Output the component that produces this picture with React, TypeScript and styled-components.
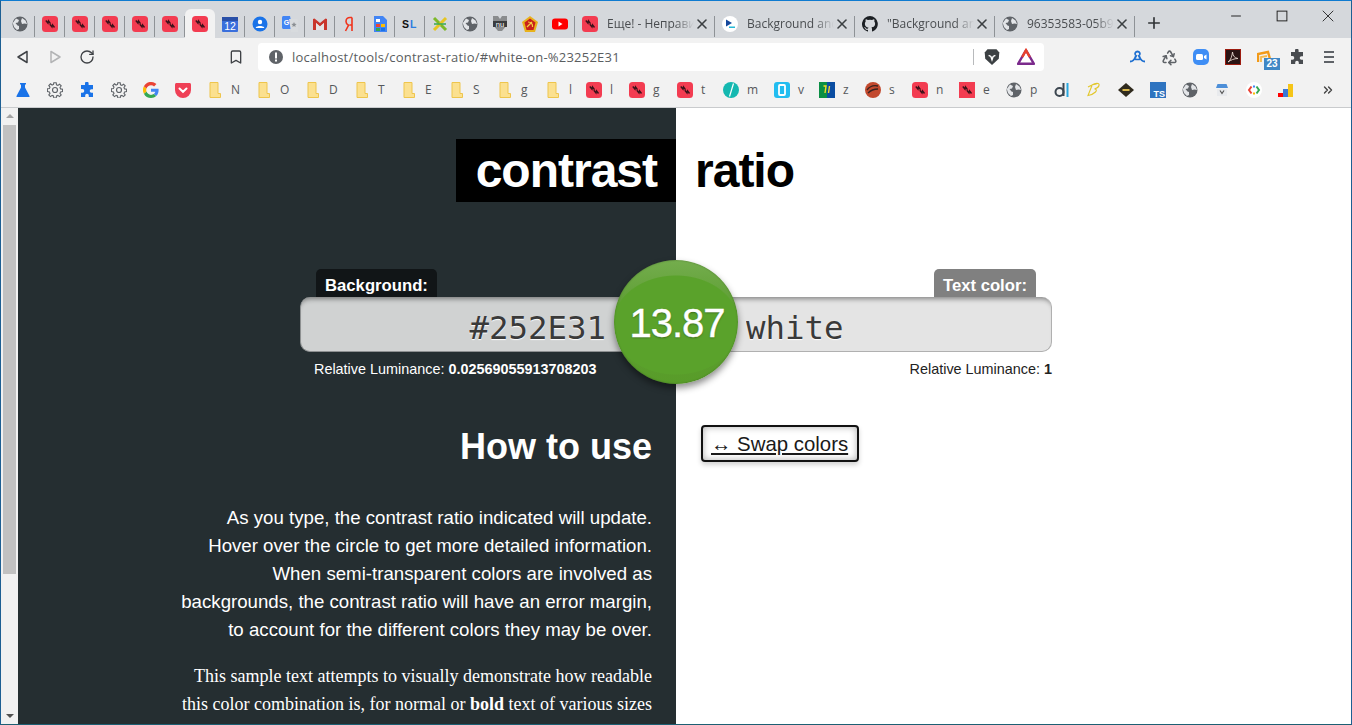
import * as React from 'react';
import styled, { createGlobalStyle } from 'styled-components';
import { Bookmark as BookmarkIcon, ChevronsRight, Plus, Recycle, RotateCw, X } from 'lucide-react';

const GlobalStyle = createGlobalStyle`
  html, body { margin: 0; padding: 0; height: 100%; overflow: hidden; background: #fff; }
  * { box-sizing: border-box; }
`;

const uiFont = '"Open Sans", "Noto Sans", sans-serif';
const pageFont = '"Liberation Sans", Arial, sans-serif';

const Frame = styled.div`
  width: 1352px;
  height: 725px;
  display: flex;
  flex-direction: column;
  overflow: hidden;
  border-top: 1px solid #0f7bd0;
  border-left: 1px solid #1d5f93;
  border-right: 1px solid #1d5f93;
  border-bottom: 1px solid #1d5f73;
  font-family: ${uiFont};
`;

const TabStrip = styled.div`
  height: 37px;
  flex: none;
  display: flex;
  align-items: flex-end;
  padding-left: 4px;
  background: #d5d8dc;
`;

const Tab = styled.div<{ $active?: boolean; $wide?: boolean }>`
  position: relative;
  width: ${p => (p.$wide ? '140px' : '30px')};
  height: 29px;
  flex: none;
  display: flex;
  align-items: center;
  justify-content: ${p => (p.$wide ? 'flex-start' : 'center')};
  padding: ${p => (p.$wide ? '0 5px 0 7px' : '0')};
  border-radius: 6px 6px 0 0;
  background: ${p => (p.$active ? '#f2f2f2' : 'transparent')};
  &::after {
    content: '';
    position: absolute;
    right: 0;
    top: 7px;
    bottom: 1px;
    width: 1px;
    background: ${p => (p.$active ? 'transparent' : '#8e9296')};
  }
`;

const TabTitle = styled.span`
  flex: 1;
  min-width: 0;
  margin-left: 9px;
  overflow: hidden;
  white-space: nowrap;
  font-size: 12px;
  color: #4a4d50;
  -webkit-mask-image: linear-gradient(to right, #000 78%, transparent 100%);
  mask-image: linear-gradient(to right, #000 78%, transparent 100%);
`;

const TabClose = styled(X)`
  flex: none;
  width: 16px;
  height: 16px;
  color: #3c4043;
`;

const NewTab = styled(Plus)`
  flex: none;
  width: 18px;
  height: 18px;
  margin: 0 0 6px 10px;
  color: #303336;
`;

const WindowControls = styled.div`
  display: flex;
  align-self: flex-start;
  margin-left: auto;
  color: #222;
`;

const WindowButton = styled.div`
  width: 46px;
  height: 29px;
  display: flex;
  align-items: center;
  justify-content: center;
`;

const Toolbar = styled.div`
  height: 38px;
  flex: none;
  display: flex;
  align-items: center;
  padding: 0 6px;
  background: #f2f2f2;
`;

const ToolButton = styled.div<{ $dim?: boolean }>`
  position: relative;
  width: 32px;
  height: 32px;
  flex: none;
  display: flex;
  align-items: center;
  justify-content: center;
  color: #3f4246;
  opacity: ${p => (p.$dim ? 0.35 : 1)};
`;

const BookmarkButton = styled(ToolButton)`
  margin-left: 117px;
`;

const Spacer = styled.div`
  flex: 1;
`;

const AddressBar = styled.div`
  width: 786px;
  height: 28px;
  flex: none;
  margin-left: 6px;
  display: flex;
  align-items: center;
  padding: 0 6px 0 10px;
  border-radius: 4px;
  background: #fff;
`;

const AddressText = styled.span`
  margin-left: 8px;
  flex: 1;
  font-size: 13px;
  letter-spacing: 0.22px;
  color: #5a5d60;
`;

const AddressDivider = styled.div`
  width: 1px;
  height: 16px;
  background: #b8babc;
`;

const AddressIcon = styled.div<{ $gap: number }>`
  width: 25px;
  height: 20px;
  margin-left: ${p => p.$gap}px;
  display: flex;
  align-items: center;
  justify-content: center;
`;

const CountBadge = styled.span`
  position: absolute;
  left: 15px;
  top: 17px;
  width: 16px;
  height: 12px;
  background: #3f87c5;
  color: #fff;
  font: 700 10px/12px ${pageFont};
  text-align: center;
`;

const BookmarkBar = styled.div`
  height: 32px;
  flex: none;
  display: flex;
  align-items: center;
  padding: 0 6px 4px;
  background: #f2f2f2;
  border-bottom: 1px solid #c9cbcd;
`;

const BookmarkItem = styled.div<{ $width: number }>`
  width: ${p => p.$width}px;
  height: 28px;
  flex: none;
  display: flex;
  align-items: center;
  gap: 8px;
  padding-left: 8px;
  font-size: 12px;
  color: #55585b;
`;

const BookmarkMore = styled(ChevronsRight)`
  width: 14px;
  height: 14px;
  margin-left: 19px;
  color: #444;
`;

const Viewport = styled.div`
  flex: 1;
  min-height: 0;
  display: flex;
`;

const Scrollbar = styled.div`
  width: 17px;
  flex: none;
  display: flex;
  flex-direction: column;
  align-items: center;
  padding: 0 2px;
  background: #f1f1f1;
`;

const ScrollArrow = styled.div<{ $down?: boolean }>`
  width: 0;
  height: 0;
  flex: none;
  margin: ${p => (p.$down ? '7px 0 6px' : '6px 0 7px')};
  border-left: 4px solid transparent;
  border-right: 4px solid transparent;
  ${p => (p.$down ? 'border-top: 4px solid #505050;' : 'border-bottom: 4px solid #a3a3a3;')}
`;

const ScrollThumb = styled.div`
  width: 13px;
  height: 449px;
  flex: none;
  background: #c1c1c1;
`;

const ScrollGap = styled.div`
  flex: 1;
`;

const Page = styled.main`
  position: relative;
  flex: 1;
  min-width: 0;
  display: grid;
  grid-template-columns: 658px 1fr;
  overflow: hidden;
  font-family: ${pageFont};
`;

const Half = styled.section<{ $dark?: boolean }>`
  display: flex;
  flex-direction: column;
  align-items: ${p => (p.$dark ? 'flex-end' : 'flex-start')};
  padding-top: 31px;
  color: ${p => (p.$dark ? '#fff' : '#000')};
  background: ${p => (p.$dark ? '#252e31' : '#fff')};
`;

const TitlePart = styled.h1<{ $dark?: boolean }>`
  margin: 0 0 67px;
  height: 63px;
  padding: 0 ${p => (p.$dark ? '19px 0 20px' : '20px 0 19px')};
  font-size: 48px;
  font-weight: 700;
  line-height: 63px;
  letter-spacing: -1px;
  background: ${p => (p.$dark ? '#000' : 'transparent')};
`;

const Field = styled.div<{ $dark?: boolean }>`
  width: 376px;
  display: flex;
  flex-direction: column;
  align-items: ${p => (p.$dark ? 'flex-start' : 'flex-end')};
`;

const FieldLabel = styled.label<{ $dark?: boolean }>`
  height: 28px;
  margin: ${p => (p.$dark ? '0 0 0 16px' : '0 16px 0 0')};
  padding: 0 9px;
  border-radius: 5px 5px 0 0;
  font-size: 16.7px;
  font-weight: 700;
  line-height: 34px;
  color: #fff;
  background: ${p => (p.$dark ? '#111517' : '#808080')};
`;

const ColorInput = styled.input<{ $dark?: boolean }>`
  display: block;
  width: 100%;
  height: 55px;
  padding: ${p => (p.$dark ? '8px 69px 0 0' : '8px 0 0 69px')};
  border: 1px solid ${p => (p.$dark ? '#8d9091' : '#b0b0b0')};
  border-top: none;
  border-radius: ${p => (p.$dark ? '10px 0 0 10px' : '0 10px 10px 0')};
  outline: none;
  font-family: "DejaVu Sans Mono", monospace;
  font-size: 32.4px;
  text-align: ${p => (p.$dark ? 'right' : 'left')};
  color: #3a3a3a;
  text-shadow: 0 1px 1px #fff;
  background: ${p => (p.$dark ? '#d0d2d2' : '#e4e4e4')};
  box-shadow: inset 0 6px 5px -4px rgba(0, 0, 0, 0.42);
`;

const Luminance = styled.div<{ $dark?: boolean }>`
  margin: 8px 0 0 ${p => (p.$dark ? '14px' : '0')};
  font-size: 14.4px;
  line-height: 18px;
  color: ${p => (p.$dark ? '#fff' : '#222')};
`;

const RatioBadge = styled.output`
  position: absolute;
  left: 596px;
  top: 152px;
  width: 124px;
  height: 124px;
  display: flex;
  align-items: center;
  justify-content: center;
  padding: 2px 0 0 2px;
  border-radius: 50%;
  font-size: 40px;
  letter-spacing: -1px;
  -webkit-text-stroke: 0.4px #fff;
  color: #fff;
  text-shadow: 0 1px 2px rgba(0, 0, 0, 0.35);
  background:
    radial-gradient(ellipse 64px 50px at 50% 65px, #5aa22b 98%, rgba(90, 162, 43, 0) 100%),
    linear-gradient(#74ad4d, #5f9f35 35%, #589c29 100%);
  box-shadow: 0 4px 7px rgba(0, 0, 0, 0.45), inset 0 0 2px rgba(0, 0, 0, 0.3);
`;

const HowTo = styled.div`
  width: 100%;
  padding: 0 24px 0 100px;
  text-align: right;
`;

const HowToTitle = styled.h2`
  margin: 48px 0 36px;
  font-size: 36px;
  font-weight: 700;
  line-height: 42px;
`;

const HowToText = styled.p`
  margin: 0 0 18px;
  font-size: 18.67px;
  line-height: 28px;
`;

const SampleText = styled.p`
  margin: 0;
  font-family: "Liberation Serif", "Times New Roman", serif;
  font-size: 18px;
  line-height: 28px;
`;

const SwapButton = styled.a`
  display: block;
  margin: 47px 0 0 25px;
  width: 158px;
  height: 37px;
  padding: 0 8px;
  border: 2px solid #111;
  border-radius: 4px;
  font-size: 20.4px;
  line-height: 34px;
  white-space: nowrap;
  color: #1a1a1a;
  text-decoration: underline;
  background: #fff;
  box-shadow: inset 0 0 7px rgba(0, 0, 0, 0.32), 0 3px 5px rgba(0, 0, 0, 0.18);
`;

const Svg: React.FC<React.SVGProps<SVGSVGElement> & { s?: number }> = ({ s = 16, children, ...rest }) => (
  <svg width={s} height={s} viewBox="0 0 16 16" fill="none" style={{ flex: 'none' }} {...rest}>
    {children}
  </svg>
);

const Scribble: React.FC = () => (
  <path d="M3.800 4.500 6 7.200 6.500 5l2 2.700M7.800 8.300 10 11l.5-2.200 2 2.700" stroke="#3a1219" strokeWidth="1.400" />
);

const Favicon: React.FC<{ kind: string }> = ({ kind }) => {
  switch (kind) {
    case 'globe':
      return (
        <Svg>
          <circle cx="8" cy="8" r="7.500" fill="#5f6368" />
          <path d="M4 2.500 7 4 6 6.500 3.500 7l2 2.500 1.500.5v3l-2 1L2 11 .8 7zM10 2l3.500 2.500L15 8l-2.500-.5L10 8 9 5z" fill="#e3e5e8" />
        </Svg>
      );
    case 'red':
      return (
        <Svg>
          <rect width="16" height="16" rx="3.500" fill="#f33c51" />
          <Scribble />
        </Svg>
      );
    case 'redSquare':
      return (
        <Svg>
          <rect width="16" height="16" fill="#f33c51" />
          <Scribble />
        </Svg>
      );
    case 'calendar':
      return (
        <Svg>
          <rect y="1" width="16" height="15" rx="1" fill="#3a6fdc" />
          <rect y="1" width="16" height="4" fill="#2a50a8" />
          <text x="8" y="14" fontSize="10.500" fontFamily="Liberation Sans" fill="#fff" textAnchor="middle">12</text>
        </Svg>
      );
    case 'account':
      return (
        <Svg>
          <circle cx="8" cy="8" r="7.500" fill="#1a73e8" />
          <circle cx="8" cy="6" r="2.200" fill="#fff" />
          <path d="M3.800 11.500C5 9.500 11 9.500 12.200 11.500V12H3.800z" fill="#fff" />
        </Svg>
      );
    case 'translate':
      return (
        <Svg>
          <path d="M0 1.500C0 .7.700 0 1.500 0H8l3 13H1.500C.7 13 0 12.300 0 11.500z" fill="#4285f4" />
          <path d="M7 3h7.500c.8 0 1.500.7 1.500 1.500V16H9z" fill="#d8dbde" />
          <text x="4.500" y="9" fontSize="7" fontWeight="700" fontFamily="Liberation Sans" fill="#fff" textAnchor="middle">G</text>
          <path d="m12 6 .8 1.800 1.800.2-1.400 1.200.4 1.800-1.600-1-1.600 1 .4-1.800L9.400 8l1.800-.2z" fill="#8b8f93" />
        </Svg>
      );
    case 'gmail':
      return (
        <Svg>
          <path d="M1 3v11h3V7l4 3.500L12 7v7h3V3l-1.500-.5L8 7 2.500 2.500z" fill="#c9362c" />
          <path d="M4 7v7h8V7l-4 3.500z" fill="#e5e5e5" />
        </Svg>
      );
    case 'yandex':
      return (
        <Svg>
          <path d="M10 1.500H8C5.500 1.500 4 3 4 5.500c0 2 1 3 2.500 3.800L3.500 15M10 1.500V15M10 9H7.500" stroke="#f0341c" strokeWidth="1.600" />
        </Svg>
      );
    case 'doc':
      return (
        <Svg>
          <path d="M2 0h9l4 4v12H2z" fill="#4285f4" />
          <rect x="4" y="8" width="4" height="3" fill="#ea4335" />
          <rect x="9" y="8" width="4" height="3" fill="#fbbc04" />
          <rect x="4" y="12" width="4" height="3" fill="#34a853" />
          <rect x="9" y="12" width="4" height="3" fill="#1a73e8" />
          <rect x="4" y="3" width="4" height="3" fill="#fff" />
        </Svg>
      );
    case 'sl':
      return (
        <Svg>
          <text x="0" y="12" fontSize="10.500" fontWeight="700" fontFamily="Liberation Sans" fill="#111">S</text>
          <text x="8" y="12" fontSize="10.500" fontWeight="700" fontFamily="Liberation Sans" fill="#2e7de0">L</text>
        </Svg>
      );
    case 'cross':
      return (
        <Svg>
          <path d="M2 2 14 14" stroke="#7db928" strokeWidth="3" />
          <path d="M14 2 2 14" stroke="#e6c622" strokeWidth="3" />
          <path d="M2 8h12" stroke="#36a852" strokeWidth="1.500" />
        </Svg>
      );
    case 'nu':
      return (
        <Svg>
          <path d="M1 0h5l2 3 2-3h5v9l-5 6H6L1 9z" fill="#8a8c8e" />
          <rect x="1" y="5" width="14" height="6" fill="#3a3c3e" />
          <text x="8" y="10.500" fontSize="7.500" fontFamily="Liberation Sans" fill="#fff" textAnchor="middle">nu</text>
        </Svg>
      );
    case 'soviet':
      return (
        <Svg>
          <path d="M8 0 16 6l-3 10H3L0 6z" fill="#e8b21c" />
          <path d="M8 2.500 13.500 6.500 11.500 14h-7L2.500 6.500z" fill="#c9201a" />
          <path d="M5 11 10 6M6 6c3 0 5 2 4.500 5" stroke="#f3cf42" strokeWidth="1.200" />
        </Svg>
      );
    case 'youtube':
      return (
        <Svg>
          <rect y="2.500" width="16" height="11" rx="3" fill="#f00" />
          <path d="m6.500 5.500 4 2.500-4 2.500z" fill="#fff" />
        </Svg>
      );
    case 'prompt':
      return (
        <Svg>
          <circle cx="8" cy="8" r="8" fill="#fff" />
          <path d="M4 3.500 10 7 4 10.500z" fill="#15489c" />
          <rect x="7" y="10.500" width="6" height="1.500" fill="#27b9d6" />
        </Svg>
      );
    case 'github':
      return (
        <Svg>
          <path d="M8 0a8 8 0 0 0-2.500 15.600c.4.1.5-.2.5-.4v-1.400c-2.200.5-2.700-1-2.700-1-.4-.9-.9-1.200-.9-1.200-.7-.5.1-.5.1-.5.8.1 1.200.8 1.200.8.7 1.200 1.900.9 2.300.7.1-.5.3-.9.5-1.100-1.800-.2-3.600-.9-3.600-4 0-.9.300-1.600.8-2.100-.1-.2-.4-1 .1-2.100 0 0 .7-.2 2.200.8a7.600 7.600 0 0 1 4 0c1.500-1 2.200-.8 2.200-.8.4 1.100.2 1.900.1 2.100.5.6.8 1.300.8 2.100 0 3.100-1.900 3.700-3.700 3.900.3.3.6.8.6 1.500v2.200c0 .2.100.5.6.4A8 8 0 0 0 8 0z" fill="#1b1f23" />
        </Svg>
      );
    case 'flask':
      return (
        <Svg>
          <path d="M5 1h6v1.500h-1v3L14.500 14c.3.6-.1 1-.7 1H2.200c-.6 0-1-.4-.7-1L6 5.500v-3H5z" fill="#1a73e8" />
        </Svg>
      );
    case 'gear':
      return (
        <Svg>
          <circle cx="8" cy="8" r="2.500" stroke="#5f6368" strokeWidth="1.200" />
          <path d="M6.800.8h2.400l.3 2 1.400.6 1.600-1.200 1.700 1.700-1.200 1.600.6 1.400 2 .3v2.400l-2 .3-.6 1.400 1.200 1.600-1.700 1.700-1.600-1.200-1.400.6-.3 2H6.800l-.3-2-1.400-.6-1.600 1.200-1.700-1.700 1.200-1.600-.6-1.400-2-.3V6.800l2-.3.6-1.400-1.200-1.600 1.700-1.700 1.600 1.200 1.400-.6z" stroke="#5f6368" strokeWidth="1.100" />
        </Svg>
      );
    case 'puzzleBlue':
    case 'puzzle':
      return (
        <Svg>
          <path d="M6 1.500a1.800 1.800 0 0 1 3.600 0V3H14v4.200h-1.500a1.800 1.800 0 0 0 0 3.600H14V15H9.800v-1.500a1.800 1.800 0 0 0-3.600 0V15H2v-4.300h1.500a1.800 1.800 0 0 0 0-3.600H2V3h4z" fill={kind === 'puzzle' ? '#494c50' : '#1a73e8'} />
        </Svg>
      );
    case 'google':
      return (
        <Svg>
          <path d="M15.600 8.200c0-.6 0-1-.1-1.500H8v3h4.300a3.700 3.700 0 0 1-1.600 2.400l2.500 2c1.500-1.400 2.400-3.400 2.400-5.900z" fill="#4285f4" />
          <path d="M8 16c2.200 0 4-.7 5.200-1.900l-2.500-2c-.7.5-1.600.8-2.700.8-2.100 0-3.900-1.400-4.500-3.300L.9 11.700A8 8 0 0 0 8 16z" fill="#34a853" />
          <path d="M3.500 9.600a4.800 4.800 0 0 1 0-3.200L.9 4.300a8 8 0 0 0 0 7.400z" fill="#fbbc05" />
          <path d="M8 3.200c1.200 0 2.300.4 3.100 1.200l2.300-2.300A8 8 0 0 0 .9 4.300l2.600 2.100C4.100 4.500 5.900 3.200 8 3.200z" fill="#ea4335" />
        </Svg>
      );
    case 'pocket':
      return (
        <Svg>
          <path d="M1.500 1h13c.8 0 1.500.7 1.500 1.500V8A8 8 0 0 1 0 8V2.500C0 1.700.7 1 1.500 1z" fill="#ef4056" />
          <path d="m4.500 6.500 3.500 3.300 3.500-3.300" stroke="#fff" strokeWidth="2" strokeLinecap="round" />
        </Svg>
      );
    case 'folder':
      return (
        <Svg>
          <path d="M3 .5h8v11h2.500v4H3z" fill="#fbe08f" stroke="#eec54c" />
        </Svg>
      );
    case 'teal':
      return (
        <Svg>
          <circle cx="8" cy="8" r="8" fill="#14b8b0" />
          <path d="M10.500 1.500 6.500 14.500" stroke="#fff" strokeWidth="1.200" />
        </Svg>
      );
    case 'cyan':
      return (
        <Svg>
          <rect width="16" height="16" rx="3" fill="#22bdf0" />
          <rect x="5" y="3" width="6" height="10" rx="1" stroke="#fff" strokeWidth="1.800" />
        </Svg>
      );
    case 'flag':
      return (
        <Svg>
          <rect width="8" height="16" fill="#0a8f44" />
          <rect x="8" width="8" height="16" fill="#0a4da2" />
          <path d="M4.500 4 7 4 6 11M10.500 4 9.500 11" stroke="#f4d92a" strokeWidth="1.400" />
        </Svg>
      );
    case 'ball':
      return (
        <Svg>
          <circle cx="8" cy="8" r="8" fill="#c2492e" />
          <path d="M2 8c3-4 7-5 11-4M3 11c3-3 6-4 10-4" stroke="#3a2320" strokeWidth="1.300" />
        </Svg>
      );
    case 'dl':
      return (
        <Svg>
          <path d="M9.500 1v13" stroke="#3c4650" strokeWidth="2" />
          <circle cx="5.500" cy="10" r="4" stroke="#3c4650" strokeWidth="2" />
          <path d="M13.500 1v14" stroke="#2aa8e0" strokeWidth="2" />
        </Svg>
      );
    case 'bee':
      return (
        <Svg>
          <path d="M6 3c3-2 8-2.500 7 .5-.5 2-3 3-4.500 3.500 2 0 2.500 1.500 1 3-2 2-5 3-7.500 3.500L6 3.500M2 5c3-2 6-3 9-3" stroke="#e2c72c" strokeWidth="1.100" />
        </Svg>
      );
    case 'diamond':
      return (
        <Svg>
          <path d="M8 1 16 8l-8 7-8-7z" fill="#302b1e" />
          <rect x="4.500" y="7" width="7" height="2" fill="#d9b84c" />
        </Svg>
      );
    case 'ts':
      return (
        <Svg>
          <rect width="16" height="16" fill="#2f74c0" />
          <text x="15" y="14.500" fontSize="9" fontWeight="700" fontFamily="Liberation Sans" fill="#fff" textAnchor="end">TS</text>
        </Svg>
      );
    case 'store':
      return (
        <Svg>
          <path d="M2 6 3.500 2h9L14 6z" fill="#4d8fd8" />
          <rect x="3" y="7" width="10" height="7" fill="#e8eaed" />
          <path d="m6 8.500 2 3 2-3" stroke="#555" strokeWidth="1.200" />
        </Svg>
      );
    case 'chromeLabs':
      return (
        <Svg>
          <circle cx="8" cy="8" r="8" fill="#fff" />
          <path d="M5.500 4.500 3 8l2.500 3.500" stroke="#ea4335" strokeWidth="2" />
          <path d="M10.500 4.500 13 8l-2.500 3.500" stroke="#34a853" strokeWidth="2" />
          <path d="M7 4.500h2" stroke="#4285f4" strokeWidth="2" />
          <path d="M7 11.500h2" stroke="#fbbc05" strokeWidth="2" />
        </Svg>
      );
    case 'bars':
      return (
        <Svg>
          <rect x="0" y="11" width="5" height="4" fill="#f00" />
          <rect x="5" y="7" width="5" height="8" fill="#3a78d8" />
          <rect x="10" y="2" width="5" height="13" fill="#f5c518" />
        </Svg>
      );
    default:
      return null;
  }
};

const pinnedTabs = ['globe', 'red', 'red', 'red', 'red', 'red', 'red', 'calendar', 'account', 'translate', 'gmail', 'yandex', 'doc', 'sl', 'cross', 'globe', 'nu', 'soviet', 'youtube'];

const wideTabs = [
  { kind: 'red', title: 'Еще! - Неправи' },
  { kind: 'prompt', title: 'Background and' },
  { kind: 'github', title: '"Background an' },
  { kind: 'globe', title: '96353583-05b9' },
];

const bookmarks: { kind: string; label?: string; width: number }[] = [
  { kind: 'flask', width: 32 },
  { kind: 'gear', width: 32 },
  { kind: 'puzzleBlue', width: 32 },
  { kind: 'gear', width: 32 },
  { kind: 'google', width: 32 },
  { kind: 'pocket', width: 32 },
  { kind: 'folder', label: 'N', width: 49 },
  { kind: 'folder', label: 'O', width: 49 },
  { kind: 'folder', label: 'D', width: 49 },
  { kind: 'folder', label: 'T', width: 47 },
  { kind: 'folder', label: 'E', width: 48 },
  { kind: 'folder', label: 'S', width: 48 },
  { kind: 'folder', label: 'g', width: 48 },
  { kind: 'folder', label: 'l', width: 41 },
  { kind: 'red', label: 'l', width: 43 },
  { kind: 'red', label: 'g', width: 48 },
  { kind: 'red', label: 't', width: 46 },
  { kind: 'teal', label: 'm', width: 51 },
  { kind: 'cyan', label: 'v', width: 45 },
  { kind: 'flag', label: 'z', width: 46 },
  { kind: 'ball', label: 's', width: 47 },
  { kind: 'red', label: 'n', width: 47 },
  { kind: 'redSquare', label: 'e', width: 47 },
  { kind: 'globe', label: 'p', width: 48 },
  { kind: 'dl', width: 32 },
  { kind: 'bee', width: 32 },
  { kind: 'diamond', width: 32 },
  { kind: 'ts', width: 32 },
  { kind: 'globe', width: 32 },
  { kind: 'store', width: 32 },
  { kind: 'chromeLabs', width: 32 },
  { kind: 'bars', width: 32 },
];

const App: React.FC = () => (
  <Frame>
    <GlobalStyle />
    <TabStrip>
      {pinnedTabs.map((kind, i) => (
        <Tab key={i} $active={i === 6}>
          <Favicon kind={kind} />
        </Tab>
      ))}
      {wideTabs.map(tab => (
        <Tab key={tab.title} $wide>
          <Favicon kind={tab.kind} />
          <TabTitle>{tab.title}</TabTitle>
          <TabClose strokeWidth={2.4} />
        </Tab>
      ))}
      <NewTab strokeWidth={2.2} />
      <WindowControls>
        <WindowButton>
          <Svg s={12}><path d="M1.500 8h13" stroke="#222" strokeWidth="1.300" /></Svg>
        </WindowButton>
        <WindowButton>
          <Svg s={12}><rect x="1.500" y="1.500" width="13" height="13" stroke="#222" strokeWidth="1.300" /></Svg>
        </WindowButton>
        <WindowButton>
          <Svg s={12}><path d="M1 1l14 14M15 1 1 15" stroke="#222" strokeWidth="1.200" /></Svg>
        </WindowButton>
      </WindowControls>
    </TabStrip>

    <Toolbar>
      <ToolButton>
        <Svg><path d="M12 2.500v11L3 8z" stroke="#3f4246" strokeWidth="1.500" strokeLinejoin="round" /></Svg>
      </ToolButton>
      <ToolButton $dim>
        <Svg><path d="M4 2.500v11L13 8z" stroke="#3f4246" strokeWidth="1.500" strokeLinejoin="round" /></Svg>
      </ToolButton>
      <ToolButton>
        <RotateCw size={16} strokeWidth={2} />
      </ToolButton>
      <BookmarkButton>
        <BookmarkIcon size={16} strokeWidth={2} />
      </BookmarkButton>
      <AddressBar>
        <Svg>
          <circle cx="8" cy="8" r="7" fill="#5f6368" />
          <rect x="7" y="3.500" width="2" height="6" fill="#fff" />
          <rect x="7" y="10.500" width="2" height="2" fill="#fff" />
        </Svg>
        <AddressText>localhost/tools/contrast-ratio/#white-on-%23252E31</AddressText>
        <AddressDivider />
        <AddressIcon $gap={5}>
          <Svg s={18}>
            <path d="M4 1h8l2.500 3L14 9.500 8 15 2 9.500 1.500 4z" fill="#3c4043" />
            <path d="M5 6.500 7 7.500 8 10.500 9 7.500 11 6.500" stroke="#fff" strokeWidth="1.200" />
          </Svg>
        </AddressIcon>
        <AddressIcon $gap={9}>
          <Svg s={18}>
            <path d="M8 2 15 14H1z" stroke="#7b2a8c" strokeWidth="2.200" strokeLinejoin="round" />
            <path d="M4.700 8 8 2l3.300 6" stroke="#e8412c" strokeWidth="2.200" />
          </Svg>
        </AddressIcon>
      </AddressBar>
      <Spacer />
      <ToolButton>
        <Svg>
          <path d="M8.500 2.500c-2 0-3 1.800-2 3.500M8.500 2.500c2 0 3 1.800 2 3.500" stroke="#1e6fd0" strokeWidth="1.800" />
          <path d="M1 12.500c2.500 0 4.500-2 5.500-4.500l1-2M16 12.500c-2.500 0-4.500-2-5.500-4.500l-1-2" stroke="#1e6fd0" strokeWidth="2" />
          <path d="M5 10c2 .6 5 .6 7 0" stroke="#1e6fd0" strokeWidth="1.600" />
        </Svg>
      </ToolButton>
      <ToolButton>
        <Recycle size={17} strokeWidth={2.2} color="#5f6368" />
      </ToolButton>
      <ToolButton>
        <Svg>
          <rect width="16" height="16" rx="5" fill="#3f8ef5" />
          <rect x="3" y="5" width="7" height="6" rx="1.500" fill="#fff" />
          <path d="m11 7 2.500-1.500v5L11 9z" fill="#fff" />
        </Svg>
      </ToolButton>
      <ToolButton>
        <Svg>
          <rect x=".5" y=".5" width="15" height="15" fill="#2a1414" stroke="#9c1c10" />
          <path d="M3 13c3-2 4-6 4.500-10 .5 4 2 6 5.500 6.500C9 9.500 6 11 3 13z" stroke="#e8d8d0" strokeWidth=".9" />
        </Svg>
      </ToolButton>
      <ToolButton>
        <Svg>
          <path d="M1 13V5l10-2 2 7" stroke="#f29a18" strokeWidth="2.400" />
          <path d="M4 13V8l6-1" stroke="#f7b94a" strokeWidth="1.800" />
        </Svg>
        <CountBadge>23</CountBadge>
      </ToolButton>
      <ToolButton>
        <Favicon kind="puzzle" />
      </ToolButton>
      <ToolButton>
        <Svg>
          <path d="M3 3h10M3 8h10M3 13h10" stroke="#5f6368" strokeWidth="1.800" />
        </Svg>
      </ToolButton>
    </Toolbar>

    <BookmarkBar>
      {bookmarks.map((item, i) => (
        <BookmarkItem key={i} $width={item.width}>
          <Favicon kind={item.kind} />
          {item.label}
        </BookmarkItem>
      ))}
      <BookmarkMore strokeWidth={2.4} />
    </BookmarkBar>

    <Viewport>
      <Scrollbar>
        <ScrollArrow />
        <ScrollThumb />
        <ScrollGap />
        <ScrollArrow $down />
      </Scrollbar>
      <Page>
        <Half $dark>
          <TitlePart $dark>contrast</TitlePart>
          <Field $dark>
            <FieldLabel $dark htmlFor="background">Background:</FieldLabel>
            <ColorInput $dark id="background" defaultValue="#252E31" />
            <Luminance $dark>Relative Luminance: <strong>0.02569055913708203</strong></Luminance>
          </Field>
          <HowTo>
            <HowToTitle>How to use</HowToTitle>
            <HowToText>
              As you type, the contrast ratio indicated will update.<br />
              Hover over the circle to get more detailed information.<br />
              When semi-transparent colors are involved as<br />
              backgrounds, the contrast ratio will have an error margin,<br />
              to account for the different colors they may be over.
            </HowToText>
            <SampleText>
              This sample text attempts to visually demonstrate how readable<br />
              this color combination is, for normal or <strong>bold</strong> text of various sizes<br />
              and styles.
            </SampleText>
          </HowTo>
        </Half>
        <Half>
          <TitlePart>ratio</TitlePart>
          <Field>
            <FieldLabel htmlFor="foreground">Text color:</FieldLabel>
            <ColorInput id="foreground" defaultValue="white" />
            <Luminance>Relative Luminance: <strong>1</strong></Luminance>
          </Field>
          <SwapButton href="#swap">↔ Swap colors</SwapButton>
        </Half>
        <RatioBadge>13.87</RatioBadge>
      </Page>
    </Viewport>
  </Frame>
);

export default App;
